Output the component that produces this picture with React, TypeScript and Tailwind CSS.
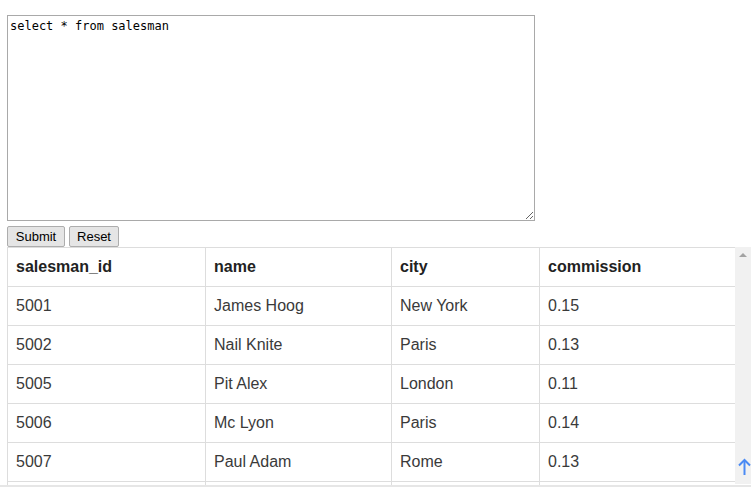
import React from "react";

const rows = [
  ["5001", "James Hoog", "New York", "0.15"],
  ["5002", "Nail Knite", "Paris", "0.13"],
  ["5005", "Pit Alex", "London", "0.11"],
  ["5006", "Mc Lyon", "Paris", "0.14"],
  ["5007", "Paul Adam", "Rome", "0.13"],
];

export default function App() {
  return (
    <div className="w-[751px] h-[487px] overflow-hidden bg-white relative" style={{ fontFamily: '"Liberation Sans", Arial, sans-serif' }}>
      <div className="pl-[7px] pt-[15px]">
        <textarea
          defaultValue="select * from salesman"
          className="block w-[528px] h-[206px] border border-[#a9a9a9] px-[2px] pt-[3px] pb-[2px] text-[12px] leading-[15px] text-black resize-y outline-none"
          style={{ fontFamily: '"DejaVu Sans Mono", "Liberation Mono", monospace' }}
        />
        <div className="flex gap-[4px] mt-[5px] h-[21px]">
          <button className="h-[21px] w-[58px] text-[13px] leading-[13px] text-black bg-[#e5e5e5] border border-[#adadad] rounded-[2px]">Submit</button>
          <button className="h-[21px] w-[50px] text-[13px] leading-[13px] text-black bg-[#e5e5e5] border border-[#adadad] rounded-[2px]">Reset</button>
        </div>
      </div>
      <div className="ml-[7px] w-[744px] h-[238px] flex overflow-hidden">
        <div className="w-[728px] h-[238px] overflow-hidden">
          <table className="border-collapse w-[728px] table-fixed text-[16px]">
            <colgroup>
              <col className="w-[198px]" />
              <col className="w-[186px]" />
              <col className="w-[148px]" />
              <col className="w-[196px]" />
            </colgroup>
            <thead>
              <tr>
                {["salesman_id", "name", "city", "commission"].map((h) => (
                  <th key={h} className="h-[39px] border border-[#dddddd] px-[8px] text-left font-bold text-[#222]">{h}</th>
                ))}
              </tr>
            </thead>
            <tbody>
              {rows.map((r) => (
                <tr key={r[0]}>
                  {r.map((c, i) => (
                    <td key={i} className="h-[39px] border border-[#dddddd] px-[8px] text-left text-[#3a3a3a]">{c}</td>
                  ))}
                </tr>
              ))}
              <tr>
                {[0, 1, 2, 3].map((i) => (
                  <td key={i} className="h-[39px] border border-[#dddddd] px-[8px]" />
                ))}
              </tr>
            </tbody>
          </table>
        </div>
        <div className="w-[16px] h-[237px] bg-[#f1f1f1] flex justify-center pt-[6px]">
          <div className="w-0 h-0 border-l-[4px] border-r-[4px] border-b-[4px] border-l-transparent border-r-transparent border-b-[#a3a3a3]" />
        </div>
      </div>
      <div className="absolute left-0 top-[485px] w-[751px] h-[2px] bg-[#e6e6e6]" />
      <svg className="absolute left-[738px] top-[458px]" width="13" height="18" viewBox="0 0 13 18" fill="none">
        <path d="M6.5 2 V17" stroke="#4a8af4" strokeWidth="2" />
        <path d="M1 7.5 L6.5 2 L12 7.5" stroke="#4a8af4" strokeWidth="2" />
      </svg>
    </div>
  );
}
